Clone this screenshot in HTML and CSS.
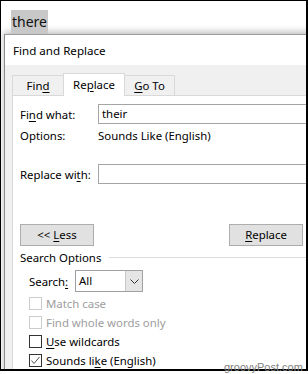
FILE: index.html
```html
<!DOCTYPE html>
<html>
<head>
<meta charset="utf-8">
<link rel="stylesheet" href="styles.css">
</head>
<body>
<div class="page">
  <div class="frame">
    <div class="doc"><span class="hl">there</span></div>
    <div class="dialog">
      <div class="titlebar">Find and Replace</div>
      <div class="body">
        <div class="tabs">
          <div class="tab t-find">Fin<u>d</u></div>
          <div class="tab t-repl active">Re<u>p</u>lace</div>
          <div class="tab t-goto"><u>G</u>o To</div>
        </div>
        <div class="panel">
          <div class="field f-find">
            <span class="lbl">Fi<u>n</u>d what:</span>
            <div class="input">their</div>
          </div>
          <div class="field f-opts">
            <span class="lbl">Options:</span>
            <span class="val">Sounds Like (English)</span>
          </div>
          <div class="field f-repl">
            <span class="lbl">Replace wi<u>t</u>h:</span>
            <div class="input"></div>
          </div>
          <div class="buttons">
            <div class="btn">&lt;&lt; <u>L</u>ess</div>
            <div class="btn"><u>R</u>eplace</div>
          </div>
          <div class="group"><span>Search Options</span><span class="rule"></span></div>
          <div class="search">
            <span class="slbl">Search<u>:</u></span>
            <div class="select">
              <span class="sval">All</span>
              <span class="arrow"><svg width="9" height="5" viewBox="0 0 9 5"><polyline points="0.5,0.5 4.5,4.5 8.5,0.5" fill="none" stroke="#333" stroke-width="1"/></svg></span>
            </div>
          </div>
          <div class="check disabled"><span class="box"></span><span>Match case</span></div>
          <div class="check disabled"><span class="box"></span><span>Find whole words only</span></div>
          <div class="check"><span class="box"></span><span><u>U</u>se wildcards</span></div>
          <div class="check"><span class="box"><svg width="11" height="11" viewBox="0 0 11 11"><polyline points="1.5,5.5 4,8.5 9.5,2" fill="none" stroke="#555" stroke-width="1"/></svg></span><span>Sounds li<u>k</u>e (English)</span></div>
        </div>
      </div>
    </div>
  </div>
  <div class="wm">groovyPost.com</div>
</div>
</body>
</html>
```

FILE: styles.css
```css
* { box-sizing: border-box; margin: 0; padding: 0; }
body { margin: 0; background: #fff; font-family: "Noto Sans", sans-serif; font-size: 11.4px; color: #000; }
u { text-decoration: underline; text-underline-offset: 2px; }

.page { position: relative; width: 308px; height: 374px; overflow: hidden; }
.frame { width: 308px; height: 371px; border: 1px solid #000; border-right-width: 2px; border-bottom-width: 2px; overflow: hidden; background: #fff; }

.doc { height: 33px; padding: 9px 0 0 10px; }
.hl { display: inline-block; height: 24px; line-height: 24px; background: #c8c8c8; font-size: 14px; padding: 0 1px 0 1px; color: #111; }

.dialog { margin-left: 3px; width: 420px; height: 400px; border-left: 1px solid #8c8c8c; border-top: 1px solid #9c9c9c; background: #fff; box-shadow: 0 -2px 7px rgba(0,0,0,0.28); }
.titlebar { height: 30px; line-height: 30px; padding: 1px 0 0 8px; background: #fff; font-size: 11.6px; }

.body { background: #f0f0f0; padding: 8px 0 0 7px; height: 100%; }
.tabs { display: flex; align-items: flex-end; height: 22px; }
.tab { height: 20px; line-height: 19px; text-align: center; border-top: 1px solid #d9d9d9; background: #f0f0f0; }
.t-find { width: 51px; border-left: 1px solid #d9d9d9; }
.t-repl { width: 62px; height: 23px; margin-bottom: -1px; position: relative; z-index: 1; background: #fff; border-left: 1px solid #d9d9d9; border-right: 1px solid #d9d9d9; line-height: 21px; }
.t-goto { width: 50px; border-right: 1px solid #d9d9d9; }

.panel { background: #fff; border-left: 1px solid #d9d9d9; border-top: 1px solid #d9d9d9; padding: 8px 0 0 7px; height: 400px; }

.field { display: grid; grid-template-columns: 78px 240px; align-items: center; }
.input { height: 20px; border: 1px solid #a5a5a5; padding-left: 3px; line-height: 18px; background: #fff; }
.f-opts { height: 20px; margin-top: 1px; }
.f-repl { margin-top: 19px; }

.buttons { display: flex; justify-content: space-between; width: 283px; margin-top: 40px; }
.btn { width: 74px; height: 22px; line-height: 20px; text-align: center; background: #e1e1e1; border: 1px solid #adadad; }

.group { display: flex; align-items: center; height: 20px; margin-top: 1px; }
.rule { flex: 1; height: 1px; background: #dcdcdc; margin-left: 8px; }

.search { display: flex; align-items: center; margin-top: 3px; padding-left: 9px; height: 22px; }
.slbl { width: 46px; }
.select { display: flex; width: 68px; height: 22px; border: 1px solid #a0a0a0; background: #fff; }
.sval { flex: 1; padding-left: 3px; line-height: 20px; }
.arrow { width: 17px; background: #e5e5e5; border-left: 1px solid #c8c8c8; display: flex; align-items: center; justify-content: center; }

.check { display: flex; align-items: center; height: 19px; padding-left: 9px; }
.search + .check { margin-top: 2px; }
.box { width: 13px; height: 13px; border: 1px solid #333; margin-right: 4px; display: flex; align-items: center; justify-content: center; background: #fff; }
.check.disabled { color: #9d9d9d; }
.check.disabled .box { border-color: #cccccc; }

.wm { position: absolute; left: 224px; top: 361px; font-family: "Liberation Sans", sans-serif; font-size: 11px; color: #808080; line-height: 13px; }
```
